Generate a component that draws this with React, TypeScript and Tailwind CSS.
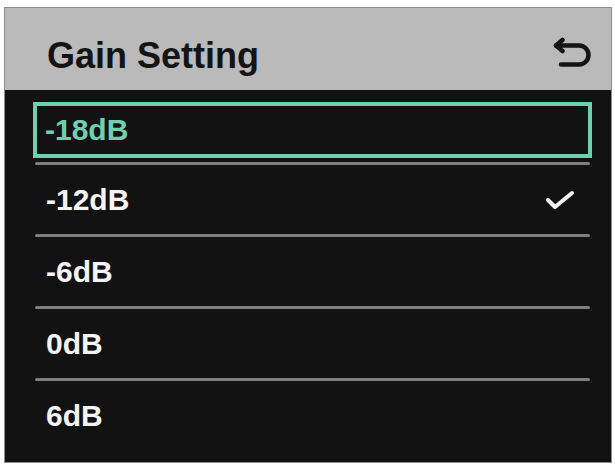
import React from 'react'

const OPTIONS = ['-18dB', '-12dB', '-6dB', '0dB', '6dB']
const FOCUSED = 0
const SELECTED = 1

function BackIcon() {
  return (
    <svg width="40" height="32" viewBox="0 0 40 32" fill="none" stroke="#141414" strokeWidth="4.5" strokeLinecap="round" strokeLinejoin="round">
      <path d="M9.5 4 3 9.5 9.5 15" />
      <path d="M3 9.5H26a9.5 9.5 0 0 1 0 19H8" />
    </svg>
  )
}

function CheckIcon() {
  return (
    <svg width="30" height="22" viewBox="0 0 30 22" fill="none" stroke="#f2f2f2" strokeWidth="4" strokeLinecap="round" strokeLinejoin="round">
      <path d="M3 11 10 18 27 4" />
    </svg>
  )
}

export default function App() {
  return (
    <div className="min-h-screen bg-white pl-[4px] pt-[7px]" style={{ fontFamily: '"Liberation Sans", Arial, sans-serif' }}>
      <div className="flex h-[456px] w-[608px] flex-col border border-[#8c8c8c] bg-[#121212]">
        <div className="flex h-[82px] shrink-0 items-center justify-between bg-[#bababa] pl-[42px] pr-[18px]">
          <h1 className="pt-[14px] text-[36px] font-bold leading-none text-[#141414]">Gain Setting</h1>
          <div className="pt-[6px]">
            <BackIcon />
          </div>
        </div>

        <div className="flex flex-col pl-[30px] pr-[21px]">
          {OPTIONS.map((label, i) => {
            const focused = i === FOCUSED
            return (
              <div key={label} className="flex flex-col">
                {focused ? (
                  <div className="-mx-[2px] mb-[4px] mt-[12px] flex h-[56px] items-center border-[4px] border-[#70cfac] pl-[8px] pr-[14px]">
                    <span className="text-[30px] font-bold leading-none text-[#70cfac]">{label}</span>
                  </div>
                ) : (
                  <div className="flex h-[69px] items-center justify-between pl-[11px] pr-[15px]">
                    <span className="text-[30px] font-bold leading-none text-[#f4f4f4]">{label}</span>
                    {i === SELECTED && <CheckIcon />}
                  </div>
                )}
                {i < OPTIONS.length - 1 && <div className="h-[3px] rounded-full bg-[#7e7e7e]" />}
              </div>
            )
          })}
        </div>
      </div>
    </div>
  )
}
